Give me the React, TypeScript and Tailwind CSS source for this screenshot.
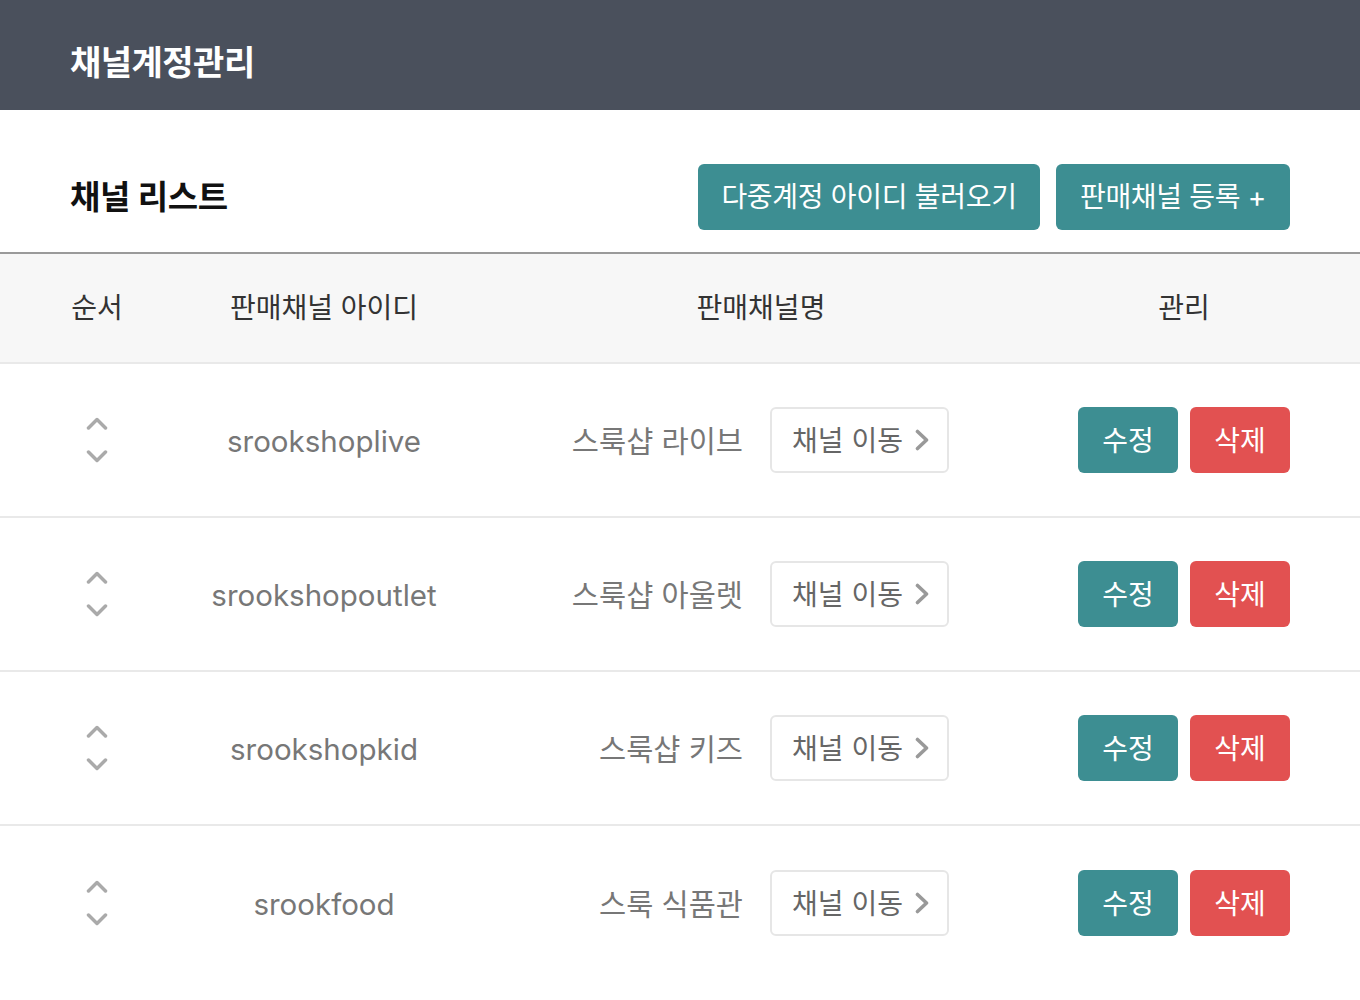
const channels = [
  { id: 'srookshoplive', name: '스룩샵 라이브' },
  { id: 'srookshopoutlet', name: '스룩샵 아울렛' },
  { id: 'srookshopkid', name: '스룩샵 키즈' },
  { id: 'srookfood', name: '스룩 식품관' },
];

const font = { fontFamily: 'Inter, "Noto Sans CJK KR", sans-serif' };

function SortArrows() {
  return (
    <div className="flex flex-col items-center gap-[20px]">
      <svg width="22" height="13" viewBox="0 0 22 13" fill="none">
        <polyline points="2.5,11 11,2.5 19.5,11" stroke="#aaaaaa" strokeWidth="3.5" strokeLinecap="round" strokeLinejoin="round" />
      </svg>
      <svg width="22" height="13" viewBox="0 0 22 13" fill="none">
        <polyline points="2.5,2 11,10.5 19.5,2" stroke="#aaaaaa" strokeWidth="3.5" strokeLinecap="round" strokeLinejoin="round" />
      </svg>
    </div>
  );
}

function Arrow() {
  return (
    <svg width="14" height="22" viewBox="0 0 14 22" fill="none">
      <polyline points="2.5,2.5 11.5,11 2.5,19.5" stroke="#999999" strokeWidth="3.6" strokeLinecap="round" strokeLinejoin="round" />
    </svg>
  );
}

export default function App() {
  return (
    <div className="min-h-screen bg-white" style={font}>
      <header className="h-[110px] bg-[#4a505c] flex items-center px-[70px] pt-[14px]">
        <h1 className="text-[34px] font-bold text-white tracking-[-0.5px]">채널계정관리</h1>
      </header>

      <div className="flex items-center justify-between px-[70px] pt-[54px] pb-[22px] border-b-2 border-[#9a9a9a]">
        <h2 className="text-[33px] font-bold text-[#111] tracking-[-0.3px] pt-[2px]">채널 리스트</h2>
        <div className="flex gap-4">
          <button className="h-[66px] w-[342px] rounded-md bg-[#3d8e92] text-white text-[28px] tracking-[-0.3px]">
            다중계정 아이디 불러오기
          </button>
          <button className="h-[66px] w-[234px] rounded-md bg-[#3d8e92] text-white text-[28px] tracking-[-0.3px]">
            판매채널 등록 +
          </button>
        </div>
      </div>

      <div className="grid grid-cols-[54px_400px_474px_1fr] items-center h-[110px] px-[70px] bg-[#f7f7f7] border-b-2 border-[#e9e9e9] text-[28px] text-[#333]">
        <div className="text-center">순서</div>
        <div className="text-center">판매채널 아이디</div>
        <div className="text-center">판매채널명</div>
        <div className="w-[212px] ml-auto text-center">관리</div>
      </div>

      {channels.map((c, i) => (
        <div
          key={c.id}
          className={`grid grid-cols-[54px_400px_474px_1fr] items-center h-[154px] px-[70px] ${
            i < channels.length - 1 ? 'border-b-2 border-[#e9e9e9]' : ''
          }`}
        >
          <SortArrows />
          <div className="text-center text-[29.5px] text-[#777] pt-[2px]">{c.id}</div>
          <div className="flex items-center justify-end gap-[27px] pr-[49px]">
            <span className="text-[29.5px] text-[#777] pt-[2px]">{c.name}</span>
            <button className="h-[66px] w-[179px] rounded-md border-2 border-[#e6e6e6] flex items-center justify-center gap-[12px] text-[28px] text-[#666] pl-[2px]">
              <span className="pt-[2px]">채널 이동</span>
              <Arrow />
            </button>
          </div>
          <div className="flex gap-3 justify-end">
            <button className="h-[66px] w-[100px] rounded-md bg-[#3d8e92] text-white text-[28px] pt-[2px]">수정</button>
            <button className="h-[66px] w-[100px] rounded-md bg-[#e25151] text-white text-[28px] pt-[2px]">삭제</button>
          </div>
        </div>
      ))}
    </div>
  );
}
